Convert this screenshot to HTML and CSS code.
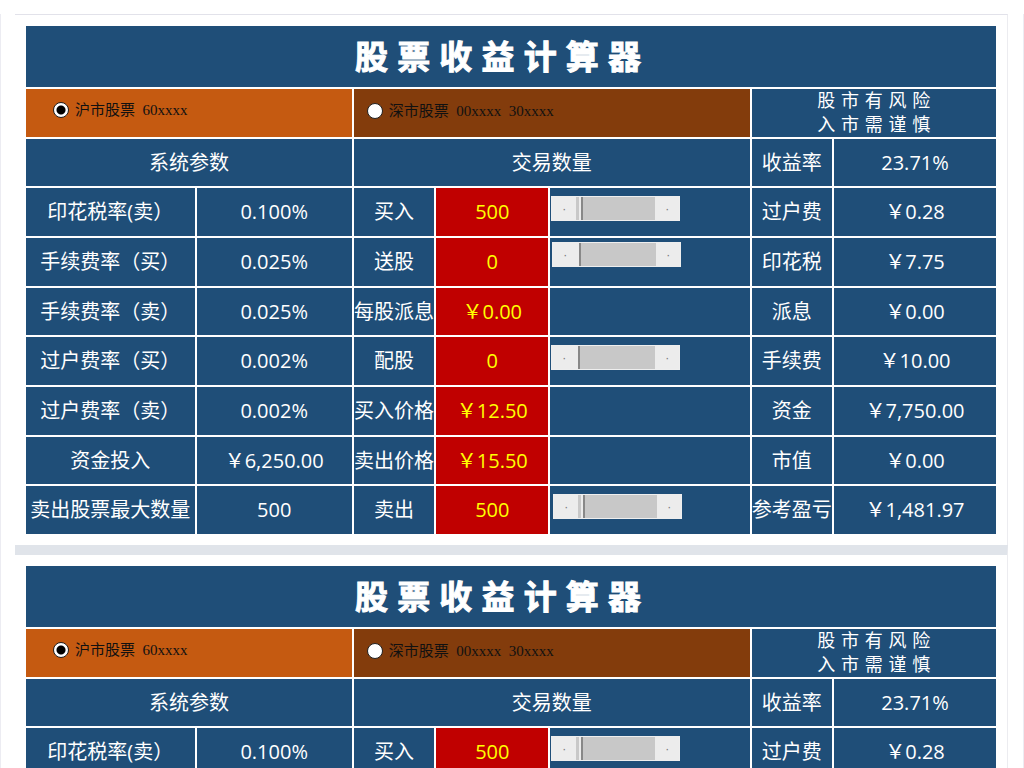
FILE: index.html
```html
<!DOCTYPE html>
<html lang="zh-CN">
<head>
  <meta charset="UTF-8">
  <meta name="viewport" content="width=device-width, initial-scale=1.0">
  <title>股票收益计算器</title>
  <link rel="stylesheet" href="styles.css">
</head>
<body>
  <main class="page">
    <section class="sheet">
      <table class="calc">
        <colgroup>
          <col class="col-param"><col class="col-rate"><col class="col-name"><col class="col-input"><col class="col-scroll"><col class="col-name"><col>
        </colgroup>
        <tr class="title-row"><th colspan="7"><h1>股 票 收 益 计 算 器</h1></th></tr>
        <tr>
          <td colspan="2" class="market sh">
            <label><input type="radio" name="market1" checked>沪市股票&nbsp; 60xxxx</label>
          </td>
          <td colspan="3" class="market sz">
            <label><input type="radio" name="market1">深市股票&nbsp; 00xxxx&nbsp; 30xxxx</label>
          </td>
          <td colspan="2" class="warning">股 市 有 风 险<br>入 市 需 谨 慎</td>
        </tr>
        <tr>
          <th colspan="2">系统参数</th>
          <th colspan="3">交易数量</th>
          <th>收益率</th><td>23.71%</td>
        </tr>
        <tr>
          <th>印花税率(卖）</th><td>0.100%</td>
          <th><label for="buy1">买入</label></th>
          <td class="entry"><input type="text" id="buy1" value="500"></td>
          <td class="scroll"><div class="scrollbar"><button type="button" aria-label="减少买入">·</button><input type="range" aria-label="买入" value="4"><button type="button" aria-label="增加买入">·</button></div></td>
          <th>过户费</th><td>￥0.28</td>
        </tr>
        <tr>
          <th>手续费率（买）</th><td>0.025%</td>
          <th><label for="bonus1">送股</label></th>
          <td class="entry"><input type="text" id="bonus1" value="0"></td>
          <td class="scroll high"><div class="scrollbar"><button type="button" aria-label="减少送股">·</button><input type="range" aria-label="送股" value="0"><button type="button" aria-label="增加送股">·</button></div></td>
          <th>印花税</th><td>￥7.75</td>
        </tr>
        <tr>
          <th>手续费率（卖）</th><td>0.025%</td>
          <th><label for="dividend1">每股派息</label></th>
          <td class="entry"><input type="text" id="dividend1" value="￥0.00"></td>
          <td></td>
          <th>派息</th><td>￥0.00</td>
        </tr>
        <tr>
          <th>过户费率（买）</th><td>0.002%</td>
          <th><label for="rights1">配股</label></th>
          <td class="entry"><input type="text" id="rights1" value="0"></td>
          <td class="scroll"><div class="scrollbar"><button type="button" aria-label="减少配股">·</button><input type="range" aria-label="配股" value="0"><button type="button" aria-label="增加配股">·</button></div></td>
          <th>手续费</th><td>￥10.00</td>
        </tr>
        <tr>
          <th>过户费率（卖）</th><td>0.002%</td>
          <th><label for="buyprice1">买入价格</label></th>
          <td class="entry"><input type="text" id="buyprice1" value="￥12.50"></td>
          <td></td>
          <th>资金</th><td>￥7,750.00</td>
        </tr>
        <tr>
          <th>资金投入</th><td>￥6,250.00</td>
          <th><label for="sellprice1">卖出价格</label></th>
          <td class="entry"><input type="text" id="sellprice1" value="￥15.50"></td>
          <td></td>
          <th>市值</th><td>￥0.00</td>
        </tr>
        <tr>
          <th>卖出股票最大数量</th><td>500</td>
          <th><label for="sell1">卖出</label></th>
          <td class="entry"><input type="text" id="sell1" value="500"></td>
          <td class="scroll inset"><div class="scrollbar"><button type="button" aria-label="减少卖出">·</button><input type="range" aria-label="卖出" value="4"><button type="button" aria-label="增加卖出">·</button></div></td>
          <th>参考盈亏</th><td>￥1,481.97</td>
        </tr>
      </table>
    </section>

    <section class="sheet">
      <table class="calc">
        <colgroup>
          <col class="col-param"><col class="col-rate"><col class="col-name"><col class="col-input"><col class="col-scroll"><col class="col-name"><col>
        </colgroup>
        <tr class="title-row"><th colspan="7"><h2>股 票 收 益 计 算 器</h2></th></tr>
        <tr>
          <td colspan="2" class="market sh">
            <label><input type="radio" name="market2" checked>沪市股票&nbsp; 60xxxx</label>
          </td>
          <td colspan="3" class="market sz">
            <label><input type="radio" name="market2">深市股票&nbsp; 00xxxx&nbsp; 30xxxx</label>
          </td>
          <td colspan="2" class="warning">股 市 有 风 险<br>入 市 需 谨 慎</td>
        </tr>
        <tr>
          <th colspan="2">系统参数</th>
          <th colspan="3">交易数量</th>
          <th>收益率</th><td>23.71%</td>
        </tr>
        <tr>
          <th>印花税率(卖）</th><td>0.100%</td>
          <th><label for="buy2">买入</label></th>
          <td class="entry"><input type="text" id="buy2" value="500"></td>
          <td class="scroll"><div class="scrollbar"><button type="button" aria-label="减少买入">·</button><input type="range" aria-label="买入" value="4"><button type="button" aria-label="增加买入">·</button></div></td>
          <th>过户费</th><td>￥0.28</td>
        </tr>
      </table>
    </section>
  </main>
</body>
</html>
```
FILE: styles.css
```css
* {
  box-sizing: border-box;
}
body {
  margin: 0;
  height: 100vh;
  overflow: hidden;
  background: #fff;
  color: #fff;
  font-family: "Open Sans", "Noto Sans CJK SC", sans-serif;
  font-size: 20px;
  line-height: 26px;
}
.page {
  margin-top: 14px;
  min-height: 100vh;
  padding: 0 15px 0 14px;
  border: solid #ececf2;
  border-width: 0 1px;
}
.sheet {
  padding: 9px;
  border-top: 1px solid #e2e2ea;
  border-right: 1px solid #ececf0;
}
.sheet + .sheet {
  border-top: 10px solid #e0e4ea;
}
.calc {
  width: 100%;
  table-layout: fixed;
  border-collapse: separate;
  border-spacing: 2px;
}
.col-param {
  width: 17.6%;
}
.col-rate {
  width: 16.2%;
}
.col-name {
  width: 8.4%;
}
.col-input {
  width: 11.7%;
}
.col-scroll {
  width: 20.8%;
}
tr {
  height: 48px;
}
tr:nth-child(3n) {
  height: 47px;
}
.title-row {
  height: 61px;
}
th,
td {
  padding: 0;
  background: #1f4e78;
  font-weight: 400;
  text-align: center;
  white-space: nowrap;
}
.title-row th {
  padding: 2px 26px 0 0;
}
h1,
h2 {
  margin: 0;
  font-family: "Liberation Sans", "Noto Sans CJK SC", sans-serif;
  font-size: 33px;
  font-weight: 700;
  line-height: 40px;
  -webkit-text-stroke: 1px #fff;
}
.market {
  color: #111;
  font-family: "Liberation Serif", "Noto Sans CJK SC", serif;
  font-size: 15px;
  line-height: 20px;
  text-align: left;
}
.market label {
  display: flex;
  align-items: center;
  gap: 6px;
}
.sh {
  padding: 0 0 6px 27px;
  background: #c55a11;
}
.sz {
  padding: 0 0 4px 13px;
  background: #833c0c;
}
input[type="radio"] {
  appearance: none;
  width: 16px;
  height: 16px;
  margin: 0;
  border: 1px solid #222;
  border-radius: 50%;
  background: #fff;
}
input[type="radio"]:checked {
  background: radial-gradient(circle, #000 4px, #fff 5px);
}
.warning {
  font-family: "DejaVu Sans", "Noto Sans CJK SC", sans-serif;
  font-size: 18px;
  line-height: 24px;
}
.entry {
  background: #c00000;
}
.entry input {
  display: block;
  width: 100%;
  padding: 0;
  border: 0;
  background: none;
  color: #ff0;
  font: inherit;
  text-align: center;
}
.scroll {
  padding: 8px 0 0 1px;
  vertical-align: top;
}
.scroll.high {
  padding: 4px 0 0 2px;
}
.scroll.inset {
  padding-left: 3px;
}
.scrollbar {
  display: flex;
  width: 129px;
  height: 25px;
  border: 1px solid #eee;
  background: #c8c8c8;
}
.scrollbar button {
  flex: 0 0 24px;
  padding: 0;
  border: 0;
  background: #ececec;
  color: #777;
  font-size: 12px;
  line-height: 20px;
}
.scrollbar input {
  appearance: none;
  flex: 1;
  min-width: 0;
  margin: 0;
  background: #c8c8c8;
}
.scrollbar input::-webkit-slider-thumb {
  appearance: none;
  width: 4px;
  height: 23px;
  border-right: 2px solid #888;
  background: #ececec;
}
```
